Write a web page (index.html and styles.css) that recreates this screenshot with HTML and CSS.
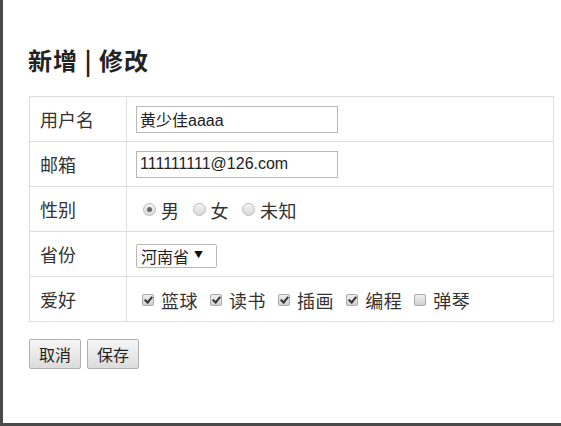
FILE: index.html
```html
<!DOCTYPE html>
<html lang="zh">
<head>
<meta charset="utf-8">
<title>新增 | 修改</title>
<link rel="stylesheet" href="styles.css">
</head>
<body>
<div class="backdrop">
  <div class="dialog">
    <h2 class="title">新增 | 修改</h2>
    <table class="form">
      <tr>
        <td class="label">用户名</td>
        <td class="field"><input class="text" type="text" value="黄少佳aaaa"></td>
      </tr>
      <tr>
        <td class="label">邮箱</td>
        <td class="field"><input class="text" type="text" value="111111111@126.com"></td>
      </tr>
      <tr>
        <td class="label">性别</td>
        <td class="field">
          <label class="opt"><input class="radio" type="radio" name="sex" checked>男</label>
          <label class="opt"><input class="radio" type="radio" name="sex">女</label>
          <label class="opt"><input class="radio" type="radio" name="sex">未知</label>
        </td>
      </tr>
      <tr>
        <td class="label">省份</td>
        <td class="field"><span class="select"><span class="select-text">河南省</span><span class="arrow">▼</span></span></td>
      </tr>
      <tr>
        <td class="label">爱好</td>
        <td class="field">
          <label class="opt"><input class="check" type="checkbox" checked>篮球</label>
          <label class="opt"><input class="check" type="checkbox" checked>读书</label>
          <label class="opt"><input class="check" type="checkbox" checked>插画</label>
          <label class="opt"><input class="check" type="checkbox" checked>编程</label>
          <label class="opt"><input class="check" type="checkbox">弹琴</label>
        </td>
      </tr>
    </table>
    <div class="actions">
      <button class="btn" type="button">取消</button>
      <button class="btn" type="button">保存</button>
    </div>
  </div>
</div>
</body>
</html>
```

FILE: styles.css
```css
html, body {
  margin: 0;
  padding: 0;
  background: #4a4a4a;
}
body {
  width: 561px;
  height: 426px;
  overflow: hidden;
  font-family: "Liberation Sans", "Noto Sans CJK SC", sans-serif;
  color: #333;
}
.backdrop {
  display: flex;
  height: 426px;
}
.dialog {
  margin-left: 3px;
  width: 558px;
  height: 423px;
  background: #fff;
  box-sizing: border-box;
  padding: 45px 8px 0 26px;
}
.title {
  margin: 0 0 22px -1px;
  font-family: "Noto Sans CJK SC", sans-serif;
  font-size: 24px;
  font-weight: bold;
  line-height: 29px;
  letter-spacing: 1px;
  color: #222;
}
.form {
  border-collapse: collapse;
  width: 525px;
  border: 1px solid #ddd;
}
.form td {
  border: 1px solid #ddd;
  height: 45px;
  padding: 0;
  box-sizing: border-box;
  vertical-align: middle;
}
.label {
  width: 97px;
  padding-left: 10px !important;
  font-family: "Noto Sans CJK SC", sans-serif;
  font-size: 18px;
  color: #333;
}
.field {
  padding-left: 9px !important;
  font-family: "Noto Sans CJK SC", sans-serif;
  font-size: 18px;
  color: #333;
}
.text {
  display: block;
  width: 202px;
  height: 27px;
  box-sizing: border-box;
  border: 1px solid #b8b8b8;
  padding: 0 3px;
  font-family: "Liberation Sans", "Noto Sans CJK SC", sans-serif;
  font-size: 16px;
  color: #222;
  outline: none;
}
.opt {
  display: inline-flex;
  align-items: center;
  margin-right: 2px;
  letter-spacing: 0.5px;
}
.radio, .check {
  appearance: none;
  -webkit-appearance: none;
  box-sizing: border-box;
  position: relative;
  flex: none;
}
.radio {
  width: 13px;
  height: 13px;
  margin: 0 5px 0 7px;
  border-radius: 50%;
  border: 1px solid #bbb;
  background: linear-gradient(#f4f4f4, #d8d8d8);
}
.radio:checked::after {
  content: "";
  position: absolute;
  left: 3px;
  top: 3px;
  width: 5px;
  height: 5px;
  border-radius: 50%;
  background: #666;
}
.check {
  width: 12px;
  height: 12px;
  border: 1px solid #aaa;
  border-radius: 2px;
  background: linear-gradient(#eee, #d0d0d0);
  margin: 0 7px 0 6px;
}
.check:checked::after {
  content: "";
  position: absolute;
  left: 3px;
  top: 0px;
  width: 3px;
  height: 6px;
  border: solid #333;
  border-width: 0 2px 2px 0;
  transform: rotate(40deg);
}
.select {
  display: inline-flex;
  align-items: center;
  width: 81px;
  height: 24px;
  box-sizing: border-box;
  border: 1px solid #b8b8b8;
  border-radius: 2px;
  padding: 0 4px;
  gap: 5px;
  vertical-align: middle;
}
.select-text {
  font-size: 16px;
  line-height: 20px;
  color: #222;
}
.arrow {
  font-size: 9px;
  color: #111;
  line-height: 9px;
  margin-top: -4px;
}
.actions {
  display: flex;
  gap: 6px;
  margin-top: 17px;
}
.btn {
  width: 52px;
  height: 30px;
  padding: 0;
  border: 1px solid #b0b0b0;
  border-radius: 2px;
  background: linear-gradient(#f6f6f6, #dcdcdc);
  font-family: "Noto Sans CJK SC", sans-serif;
  font-size: 16px;
  color: #222;
}
```
